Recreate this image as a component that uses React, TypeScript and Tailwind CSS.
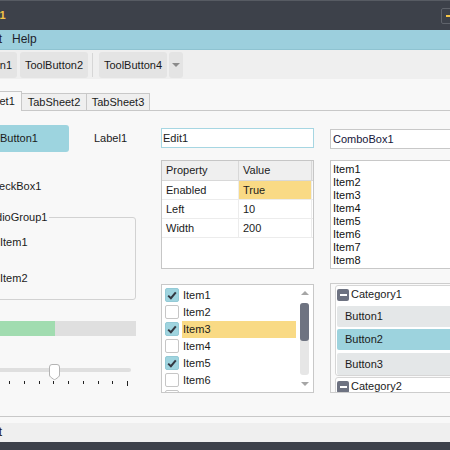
import React from "react";

const CheckMark = () => (
  <svg width="10" height="9" viewBox="0 0 10 9">
    <path d="M1.2 4.6 L3.9 7.2 L8.8 1.4" fill="none" stroke="#333740" strokeWidth="2" />
  </svg>
);

function CheckItem({ label, checked, selected }: { label: string; checked?: boolean; selected?: boolean }) {
  return (
    <div className="h-[17px] shrink-0 flex items-center">
      <div
        className={
          checked
            ? "ml-[3px] w-[14px] h-[14px] shrink-0 rounded-[2px] bg-[#9fd4df] border border-[#93cad6] flex items-center justify-center"
            : "ml-[3px] w-[14px] h-[14px] shrink-0 rounded-[2px] bg-white border border-[#c6c6c6]"
        }
      >
        {checked && <CheckMark />}
      </div>
      <div
        className={
          selected
            ? "ml-[3px] mr-[1px] flex-1 h-[17px] flex items-center pl-[1px] bg-[#f9da85]"
            : "ml-[3px] mr-[1px] flex-1 h-[17px] flex items-center pl-[1px]"
        }
      >
        {label}
      </div>
    </div>
  );
}

function ToolBtn({ children }: { children: React.ReactNode }) {
  return (
    <div className="w-[68px] h-[26px] shrink-0 rounded-[3px] bg-[#e4e4e4] flex items-center justify-center">
      {children}
    </div>
  );
}

function Minus() {
  return (
    <div className="w-[12px] h-[12px] shrink-0 rounded-[2px] bg-[#6d7281] flex items-center justify-center">
      <div className="w-[7px] h-[2px] bg-white" />
    </div>
  );
}

export default function App() {
  const ticks = Array.from({ length: 11 }, (_, i) => i);
  return (
    <div className="w-[450px] h-[450px] overflow-hidden bg-[#f8f8f8] font-['Liberation_Sans',Arial,sans-serif] text-[11px] leading-[13px] text-[#1b1b1b]">
      <div className="-ml-[53px] w-[620px] h-[450px] flex flex-col">
        {/* Title bar */}
        <div className="h-[30px] shrink-0 bg-[#3d414a] border-t border-[#575b63] flex items-center">
          <div className="w-[494px] shrink-0 pl-[25px] font-bold text-[11px] text-[#f6c546]">Form1</div>
          <div className="w-[30px] h-[16px] shrink-0 border border-[#5f636b] rounded-[2px] pl-[4px] flex items-center">
            <div className="w-[10px] h-[2px] bg-[#f6c546]" />
          </div>
          <div className="ml-[2px] w-[30px] h-[16px] shrink-0 border border-[#5f636b] rounded-[2px]" />
          <div className="ml-[2px] w-[30px] h-[16px] shrink-0 border border-[#5f636b] rounded-[2px]" />
        </div>

        {/* Menu bar */}
        <div className="h-[20px] shrink-0 bg-[#9ccfdd] border-b border-[#8fc3d1] flex items-center text-[12px] text-[#1e1e2a]">
          <span className="px-[5px]">File</span>
          <span className="px-[5px]">Edit</span>
          <span className="px-[5px]">Help</span>
        </div>

        {/* Toolbar */}
        <div className="h-[29px] shrink-0 bg-[#efefef] flex items-start pt-[2px] pl-[2px]">
          <ToolBtn>ToolButton1</ToolBtn>
          <div className="ml-[3px]">
            <ToolBtn>ToolButton2</ToolBtn>
          </div>
          <div className="ml-[3px] w-[5px] h-[26px] shrink-0 pl-[1px] pt-[1px]">
            <div className="w-[1px] h-[24px] bg-[#d6d6d6]" />
          </div>
          <div className="ml-[3px]">
            <ToolBtn>ToolButton4</ToolBtn>
          </div>
          <div className="ml-[2px] w-[14px] h-[26px] shrink-0 rounded-[3px] bg-[#e4e4e4] flex items-center justify-center">
            <div className="w-0 h-0 border-l-[4px] border-r-[4px] border-t-[4px] border-l-transparent border-r-transparent border-t-[#8a8a8a]" />
          </div>
        </div>

        {/* Tabs */}
        <div className="h-[32px] shrink-0 flex items-end pl-[8px] border-b border-[#c8c8c8]">
          <div className="relative z-10 -mb-px w-[67px] h-[20px] shrink-0 bg-[#f8f8f8] border border-b-0 border-[#c8c8c8] flex items-center justify-center">
            TabSheet1
          </div>
          <div className="w-[65px] h-[17px] shrink-0 bg-[#efefef] border border-b-0 border-l-0 border-[#c8c8c8] flex items-center justify-center">
            TabSheet2
          </div>
          <div className="w-[63px] h-[17px] shrink-0 bg-[#efefef] border border-b-0 border-l-0 border-[#c8c8c8] flex items-center justify-center">
            TabSheet3
          </div>
        </div>

        {/* Page content */}
        <div className="h-[306px] shrink-0 border-b border-[#c8c8c8] flex pl-[22px]">
          {/* Column A */}
          <div className="w-[167px] shrink-0 flex flex-col">
            <div className="mt-[14px] flex items-center">
              <div className="w-[100px] h-[27px] shrink-0 rounded-[3px] bg-[#9dd4df] flex items-center justify-center">Button1</div>
              <div className="ml-[25px]">Label1</div>
            </div>
            <div className="mt-[26px] h-[16px] flex items-center">
              <div className="w-[13px] h-[13px] shrink-0 rounded-[2px] border border-[#c4c4c4] bg-white" />
              <div className="ml-[3px]">CheckBox1</div>
            </div>
            <fieldset className="mt-[17px] h-[89px] border border-[#d2d2d2] rounded-[3px]">
              <legend className="ml-[10px] px-[2px] leading-[13px]">RadioGroup1</legend>
              <div className="mt-[10px] ml-[13px] h-[16px] flex items-center">
                <div className="w-[13px] h-[13px] shrink-0 rounded-full border border-[#c4c4c4] bg-white" />
                <div className="ml-[4px]">Item1</div>
              </div>
              <div className="mt-[20px] ml-[13px] h-[16px] flex items-center">
                <div className="w-[13px] h-[13px] shrink-0 rounded-full border border-[#c4c4c4] bg-white" />
                <div className="ml-[4px]">Item2</div>
              </div>
            </fieldset>
            <div className="mt-[21px] h-[15px] bg-[#dfdfdf] flex">
              <div className="w-[86px] h-full bg-[#a1dcb0]" />
            </div>
            <div className="mt-[26px] relative h-[26px]">
              <div className="absolute left-[4px] right-[5px] top-[6px] h-[4px] rounded-full bg-[#dfdfdf]" />
              <svg className="absolute left-[80px] top-[2px]" width="11" height="16" viewBox="0 0 11 16">
                <path d="M0.5 3 Q0.5 0.5 3 0.5 H8 Q10.5 0.5 10.5 3 V11 Q10.5 12 9.5 13 L6.5 15.2 Q5.5 15.8 4.5 15.2 L1.5 13 Q0.5 12 0.5 11 Z" fill="#ffffff" stroke="#b4b4b4" strokeWidth="1" />
              </svg>
              <div className="absolute left-[10.5px] top-[19px] w-[148.5px] flex justify-between items-start">
                {ticks.map((i) => (
                  <div key={i} className={i === 0 || i === 10 ? "w-[1px] h-[5px] bg-[#222]" : "w-[1px] h-[3px] bg-[#222]"} />
                ))}
              </div>
            </div>
          </div>

          {/* Column B */}
          <div className="ml-[25px] w-[153px] shrink-0 flex flex-col">
            <div className="mt-[17px] h-[20px] border border-[#a6d6e2] bg-white pl-[1px] flex items-center">Edit1</div>
            <div className="mt-[12px] h-[109px] border border-[#c6c6c6] bg-white">
              <div className="flex h-[20px] bg-[#efefef] border-b border-[#d8d8d8]">
                <div className="w-[77px] border-r border-[#d8d8d8] pl-[4px] flex items-center">Property</div>
                <div className="w-[73px] border-r border-[#d8d8d8] pl-[4px] flex items-center">Value</div>
              </div>
              {[
                ["Enabled", "True"],
                ["Left", "10"],
                ["Width", "200"],
              ].map(([k, v], i) => (
                <div key={k} className="flex h-[19px] border-b border-[#ececec]">
                  <div className="w-[77px] border-r border-[#ececec] pl-[4px] flex items-center">{k}</div>
                  <div
                    className={
                      i === 0
                        ? "w-[73px] border-r border-[#ececec] pl-[4px] flex items-center bg-[#f9da85]"
                        : "w-[73px] border-r border-[#ececec] pl-[4px] flex items-center"
                    }
                  >
                    {v}
                  </div>
                </div>
              ))}
            </div>
            <div className="mt-[15px] h-[109px] border border-[#c8c8c8] bg-white flex overflow-hidden">
              <div className="flex-1 flex flex-col pt-[1.5px]">
                <CheckItem label="Item1" checked />
                <CheckItem label="Item2" />
                <CheckItem label="Item3" checked selected />
                <CheckItem label="Item4" />
                <CheckItem label="Item5" checked />
                <CheckItem label="Item6" />
                <CheckItem label="Item7" />
              </div>
              <div className="w-[16px] shrink-0 flex flex-col items-center pt-[6px] pr-[1px]">
                <div className="w-0 h-0 border-l-[4px] border-r-[4px] border-b-[4px] border-l-transparent border-r-transparent border-b-[#a6a6a6]" />
                <div className="mt-[7.5px] w-[9px] h-[72px] rounded-[3px] bg-[#e6e6e6] flex flex-col">
                  <div className="h-[38px] rounded-[3px] bg-[#6e7381]" />
                </div>
                <div className="mt-[7px] w-0 h-0 border-l-[4px] border-r-[4px] border-t-[4px] border-l-transparent border-r-transparent border-t-[#a6a6a6]" />
              </div>
            </div>
          </div>

          {/* Column C */}
          <div className="ml-[16px] w-[200px] shrink-0 flex flex-col">
            <div className="mt-[18px] h-[20px] border border-[#c8c8c8] bg-white pl-[2px] flex items-center text-[#15153a]">ComboBox1</div>
            <div className="mt-[11px] h-[109px] border border-[#c8c8c8] bg-white pt-[2px] pl-[2px] flex flex-col">
              {["Item1", "Item2", "Item3", "Item4", "Item5", "Item6", "Item7", "Item8"].map((t) => (
                <div key={t} className="h-[13px] leading-[13px] text-[#111]">{t}</div>
              ))}
            </div>
            <div className="mt-[14px] h-[110px] border border-[#cdcdcd] bg-[#fafafa] pt-[1px] pl-[4px] overflow-hidden">
              <div className="h-[91px] border border-[#d6d6d6] rounded-[3px] bg-white pl-[1px] flex flex-col">
                <div className="h-[17px] shrink-0 flex items-center">
                  <Minus />
                  <div className="ml-[2px]">Category1</div>
                </div>
                <div className="mt-[3px] h-[21px] shrink-0 rounded-[2px] bg-[#e4e7e8] pl-[8px] flex items-center">Button1</div>
                <div className="mt-[2px] h-[21px] shrink-0 rounded-[2px] bg-[#9dd3de] pl-[8px] flex items-center">Button2</div>
                <div className="mt-[3px] h-[22px] shrink-0 rounded-[2px] bg-[#e4e7e8] pl-[8px] flex items-center">Button3</div>
              </div>
              <div className="mt-[1px] h-[30px] border border-[#d6d6d6] rounded-[3px] bg-white pl-[1px] flex flex-col">
                <div className="h-[17px] shrink-0 flex items-center">
                  <Minus />
                  <div className="ml-[2px]">Category2</div>
                </div>
              </div>
            </div>
          </div>
        </div>

        <div className="h-[6px] shrink-0" />
        <div className="h-[19px] shrink-0 bg-[#efefef] pl-[33px] flex items-center text-[12px]">Text</div>
        <div className="h-[8px] shrink-0 bg-[#3d414a]" />
      </div>
    </div>
  );
}
